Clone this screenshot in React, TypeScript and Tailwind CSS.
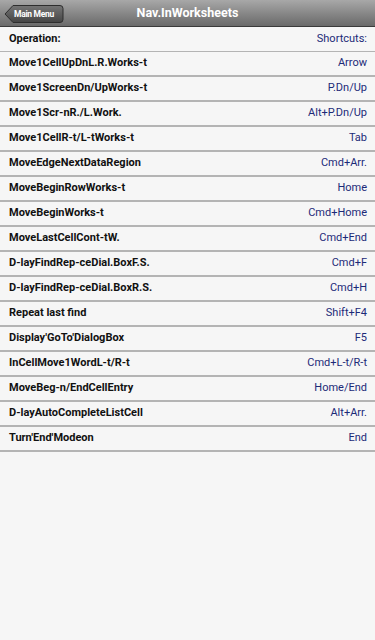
import React from "react";

const rows: [string, string][] = [
  ["Move1CellUpDnL.R.Works-t", "Arrow"],
  ["Move1ScreenDn/UpWorks-t", "P.Dn/Up"],
  ["Move1Scr-nR./L.Work.", "Alt+P.Dn/Up"],
  ["Move1CellR-t/L-tWorks-t", "Tab"],
  ["MoveEdgeNextDataRegion", "Cmd+Arr."],
  ["MoveBeginRowWorks-t", "Home"],
  ["MoveBeginWorks-t", "Cmd+Home"],
  ["MoveLastCellCont-tW.", "Cmd+End"],
  ["D-layFindRep-ceDial.BoxF.S.", "Cmd+F"],
  ["D-layFindRep-ceDial.BoxR.S.", "Cmd+H"],
  ["Repeat last find", "Shift+F4"],
  ["Display'GoTo'DialogBox", "F5"],
  ["InCellMove1WordL-t/R-t", "Cmd+L-t/R-t"],
  ["MoveBeg-n/EndCellEntry", "Home/End"],
  ["D-layAutoCompleteListCell", "Alt+Arr."],
  ["Turn'End'Modeon", "End"],
];

export default function App() {
  return (
    <div className="w-[375px] h-[640px] bg-[#f6f6f6] font-['Roboto',sans-serif]">
      {/* header bar */}
      <div className="relative h-[27px] flex items-center justify-center bg-gradient-to-b from-[#a8a8a8] to-[#6a6a6a] border-b border-[#3a3a3a]">
        <div className="absolute left-[4px] top-[4px] flex items-center">
          <svg width="60" height="20" viewBox="0 0 60 20" className="absolute left-0 top-0">
            <defs>
              <linearGradient id="btn" x1="0" y1="0" x2="0" y2="1">
                <stop offset="0" stopColor="#767676" />
                <stop offset="1" stopColor="#444444" />
              </linearGradient>
            </defs>
            <path
              d="M1 10 L9 1.5 H56 Q59 1.5 59 4.5 V15.5 Q59 18.5 56 18.5 H9 Z"
              fill="url(#btn)"
              stroke="#2e2e2e"
              strokeWidth="1"
            />
          </svg>
          <span className="relative pl-[10px] w-[60px] h-[20px] flex items-center text-[8.5px] font-bold text-white tracking-[-0.3px]">
            Main Menu
          </span>
        </div>
        <span className="text-white font-bold text-[12.5px] pt-[1px]">Nav.InWorksheets</span>
      </div>

      <div className="h-[25px] flex items-center justify-between pl-[9px] pr-[8px] border-b border-[#b4b4b4]">
        <span className="text-[11px] font-bold text-[#111]">Operation:</span>
        <span className="text-[11px] text-[#1c2a78]">Shortcuts:</span>
      </div>
      {rows.map(([op, key]) => (
        <div
          key={op}
          className="h-[25px] flex items-center justify-between pl-[9px] pr-[8px] border-b-2 border-[#b4b4b4]"
        >
          <span className="text-[11px] font-bold text-[#111]">{op}</span>
          <span className="text-[11px] text-[#1c2a78]">{key}</span>
        </div>
      ))}
    </div>
  );
}
